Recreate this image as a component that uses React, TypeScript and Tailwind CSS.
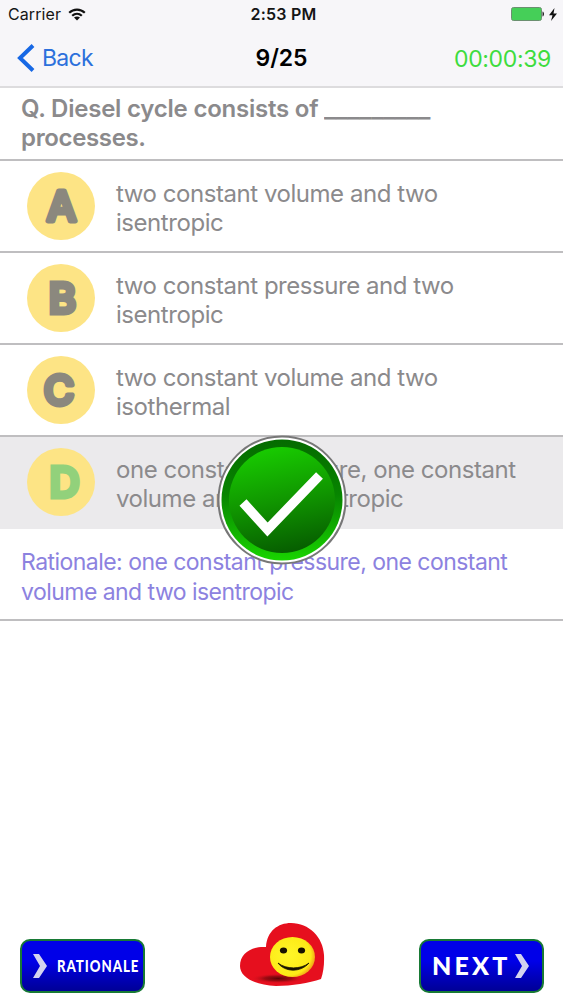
import clsx from 'clsx';

type Option = {
    letter: string;
    lines: string[];
    correct?: boolean;
    x: number;
    join: 'round' | 'miter';
};

const options: Option[] = [
    { letter: 'A', lines: ['two constant volume and two', 'isentropic'], x: 34.5, join: 'round' },
    { letter: 'B', lines: ['two constant pressure and two', 'isentropic'], x: 35.5, join: 'miter' },
    { letter: 'C', lines: ['two constant volume and two', 'isothermal'], x: 32, join: 'round' },
    { letter: 'D', lines: ['one constant pressure, one constant', 'volume and two isentropic'], correct: true, x: 37.5, join: 'miter' },
];

function StatusBar() {
    return (
        <div className="flex h-7 items-center justify-between pl-2 pr-1.5 text-[16px] leading-7 text-[#151515]">
            <div className="flex w-48 items-center gap-[7px]">
                <span className="tracking-[0.1px]">Carrier</span>
                <svg width="18" height="13" viewBox="0 0 18 13" fill="none" stroke="#111" strokeWidth="2.2">
                    <path d="M1.2 4.8C5.5.5 12.5.5 16.8 4.8" />
                    <path d="M4.2 7.8c2.8-2.6 6.8-2.6 9.6 0" />
                    <path d="M9 12.6 6 9.6c1.7-1.5 4.3-1.5 6 0z" fill="#111" stroke="none" />
                </svg>
            </div>
            <span className="pl-0.5 font-semibold tracking-[0.2px]">2:53 PM</span>
            <div className="flex w-48 items-center justify-end gap-1">
                <svg width="34" height="14" viewBox="0 0 34 14">
                    <rect x=".5" y=".5" width="30" height="13" rx="2" fill="#45cf58" stroke="#6b8f70" />
                    <path d="M31.5 4.5c2 .4 2 4.6 0 5z" fill="#222" />
                </svg>
                <svg width="8" height="13" viewBox="0 0 8 13" fill="#111">
                    <path d="M5.5 0 0 7.3h3.5L2 13l6-7.6H4.5z" />
                </svg>
            </div>
        </div>
    );
}

function NavBar() {
    return (
        <div className="flex h-[59px] items-center justify-between pl-[17px] pr-3">
            <button className="flex w-[171px] items-center gap-[7px] pt-px text-[23px] text-[#2c70dc]">
                <svg width="18" height="28" viewBox="0 0 18 28" fill="none" stroke="#1768e5" strokeWidth="4">
                    <path d="M16 1.5 3 14l13 12.5" />
                </svg>
                <span className="tracking-[-0.7px]">Back</span>
            </button>
            <h1 className="pt-px text-[23px] font-semibold tracking-[-0.1px] text-black">9/25</h1>
            <span className="w-44 pt-[3px] text-right text-[23px] tracking-[-0.35px] text-[#3edc3e]">00:00:39</span>
        </div>
    );
}

function LetterBadge({ letter, correct, x, join }: Option) {
    const color = correct ? '#92d17b' : '#8b887e';
    return (
        <svg className="shrink-0" width="68" height="68" viewBox="0 0 68 68">
            <circle cx="34" cy="34" r="34" fill="#fde485" />
            <text
                x={x}
                y="48.5"
                textAnchor="middle"
                fontSize="41.5"
                fontWeight="500"
                fill={color}
                stroke={color}
                strokeWidth="5"
                strokeLinejoin={join}
            >
                {letter}
            </text>
        </svg>
    );
}

function Lines({ lines }: { lines: string[] }) {
    return (
        <>
            {lines.map((line) => (
                <span key={line} className="block whitespace-nowrap">{line}</span>
            ))}
        </>
    );
}

function CheckMark() {
    return (
        <svg className="absolute left-[216px] top-[434px]" width="132" height="132" viewBox="0 0 132 132">
            <defs>
                <linearGradient id="rim" x1="0" y1="0" x2="0" y2="1">
                    <stop offset="0" stopColor="#056b00" />
                    <stop offset=".45" stopColor="#078400" />
                    <stop offset="1" stopColor="#19d400" />
                </linearGradient>
                <linearGradient id="face" x1=".4" y1="0" x2=".6" y2="1">
                    <stop offset="0" stopColor="#18cb00" />
                    <stop offset=".5" stopColor="#109600" />
                    <stop offset="1" stopColor="#065c00" />
                </linearGradient>
            </defs>
            <circle cx="66" cy="66" r="63.5" fill="#fff" stroke="#777" strokeWidth="2" />
            <circle cx="66" cy="66" r="60.5" fill="url(#rim)" />
            <circle cx="66" cy="66" r="53" fill="url(#face)" />
            <path d="M27 68.5 51.5 95.5l52-54" fill="none" stroke="#fff" strokeWidth="9.5" />
        </svg>
    );
}

function HeartSmiley() {
    return (
        <svg width="86" height="64" viewBox="0 0 86 64">
            <defs>
                <radialGradient id="smiley" cx=".4" cy=".45" r=".62">
                    <stop offset="0" stopColor="#fff629" />
                    <stop offset=".82" stopColor="#fdea16" />
                    <stop offset="1" stopColor="#f09a18" />
                </radialGradient>
                <radialGradient id="shadow">
                    <stop offset="0" stopColor="#5a0505" />
                    <stop offset=".5" stopColor="#8d0a10" stopOpacity=".8" />
                    <stop offset="1" stopColor="#e60f1e" stopOpacity="0" />
                </radialGradient>
            </defs>
            <path d="M27 25C28 9 39 1 52 1c18 0 32 14 33 32 .4 9-.5 17-3 24-12 4-29 7-45 7C15 63 1 55 1 44c0-13 12-20 26-19z" fill="#e60f1e" />
            <ellipse cx="39" cy="56.5" rx="27" ry="5" fill="url(#shadow)" />
            <ellipse cx="53.5" cy="35" rx="22.5" ry="20" fill="url(#smiley)" />
            <ellipse cx="44.5" cy="28.5" rx="3.6" ry="3" fill="#171100" />
            <ellipse cx="62.5" cy="28.5" rx="3.6" ry="3" fill="#171100" />
            <path d="M39 41c7 9.5 23 9.5 31 0-8 6.5-23 6.5-31 0z" fill="#171100" stroke="#171100" strokeWidth=".8" />
        </svg>
    );
}

function Chevron({ className }: { className?: string }) {
    return (
        <svg className={className} width="15" height="24" viewBox="0 0 15 24" fill="#d3d3ef">
            <path d="M0 0h6l8 12-8 12H0l7-12z" />
        </svg>
    );
}

const buttonStyle =
    'flex h-[54px] w-[125px] items-center rounded-[10px] border-2 border-[#187a35] bg-linear-to-b from-[#0000e8] from-40% to-[#000096] text-white';

export default function App() {
    return (
        <div className="relative flex h-[1000px] w-[563px] flex-col overflow-hidden bg-white font-['Inter',sans-serif]">
            <header className="h-[88px] border-b-2 border-[#dddcde] bg-[#f7f6f9]">
                <StatusBar />
                <NavBar />
            </header>

            <main className="flex-1 text-[24px] leading-[29px] text-[#8b8a8c]">
                {/* Question */}
                <h2 className="h-[73px] border-b-2 border-[#bfbec0] pl-[21px] pt-[6px] font-semibold tracking-[-0.35px]">
                    <span className="block whitespace-nowrap tracking-[-0.22px]">
                        Q. Diesel cycle consists of{' '}
                        <span className="inline-block origin-left scale-x-[1.08] tracking-[-0.35px]">_________</span>
                    </span>
                    <span className="block">processes.</span>
                </h2>

                {/* Answers */}
                {options.map((option) => (
                    <div
                        key={option.letter}
                        className={clsx(
                            'flex h-[92px] items-center gap-[21px] pl-[27px]',
                            option.correct ? 'bg-[#ebeaec] pb-0.5' : 'border-b-2 border-[#bfbec0]'
                        )}
                    >
                        <LetterBadge {...option} />
                        <p className="pt-[3px] tracking-[-0.45px]">
                            <Lines lines={option.lines} />
                        </p>
                    </div>
                ))}

                {/* Rationale */}
                <div className="h-[92px] border-b-2 border-[#bfbec0] pl-[21px] pt-[18px] text-[23px] leading-[30px] tracking-[-0.54px] text-[#8c82df]">
                    <Lines lines={['Rationale: one constant pressure, one constant', 'volume and two isentropic']} />
                </div>
            </main>

            <footer className="flex h-[78px] items-start justify-between pl-5 pr-[19px]">
                <button className={clsx(buttonStyle, 'mt-[17px] gap-[9px] pl-[11px] font-[Lato,sans-serif]')}>
                    <Chevron className="shrink-0" />
                    <span className="w-[83px] origin-left scale-x-[0.78] whitespace-nowrap text-left text-[17px] font-black tracking-[1.2px]">
                        RATIONALE
                    </span>
                </button>
                <HeartSmiley />
                <button className={clsx(buttonStyle, 'mt-[17px] gap-1 pl-[11px] font-[Lato,sans-serif] text-[25px] font-black')}>
                    <span className="tracking-[3.2px]">NEXT</span>
                    <Chevron className="shrink-0" />
                </button>
            </footer>

            <CheckMark />
        </div>
    );
}
